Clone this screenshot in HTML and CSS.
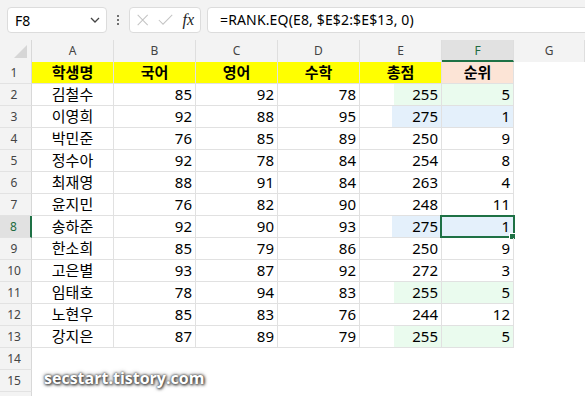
FILE: index.html
```html
<!DOCTYPE html>
<html lang="ko">
<head>
  <meta charset="UTF-8">
  <title>RANK.EQ</title>
  <link rel="stylesheet" href="styles.css">
</head>
<body>
<div class="app">
  <div class="formula-bar">
    <div class="name-box">
      <span>F8</span>
      <svg class="chevron" width="10" height="6" viewBox="0 0 10 6"><path d="M1 1 L5 5 L9 1" fill="none" stroke="#444" stroke-width="1.3"/></svg>
    </div>
    <div class="dots"><i></i><i></i><i></i></div>
    <div class="fx-box">
      <svg width="16" height="16" viewBox="0 0 16 16"><path d="M2 2 L14 14 M14 2 L2 14" stroke="#c4c4c4" stroke-width="1.2"/></svg>
      <svg width="18" height="16" viewBox="0 0 18 16"><path d="M1 8 L6 13 L17 2" fill="none" stroke="#c4c4c4" stroke-width="1.2"/></svg>
      <span class="fx">fx</span>
    </div>
    <div class="formula">=RANK.EQ(E8, $E$2:$E$13, 0)</div>
  </div>

  <div class="sheet">
    <div class="row head">
      <div class="corner"><svg width="13" height="13" viewBox="0 0 13 13"><path d="M13 0 L13 13 L0 13 Z" fill="#d6d6d6"/></svg></div>
      <div class="ch">A</div><div class="ch">B</div><div class="ch">C</div><div class="ch">D</div><div class="ch">E</div><div class="ch active">F</div><div class="ch">G</div>
    </div>
    <div class="row">
      <div class="rh">1</div>
      <div class="c title yellow">학생명</div><div class="c title yellow">국어</div><div class="c title yellow">영어</div><div class="c title yellow">수학</div><div class="c title yellow">총점</div><div class="c title peach">순위</div><div class="e"></div>
    </div>
    <div class="row">
      <div class="rh">2</div>
      <div class="c name">김철수</div><div class="c">85</div><div class="c">92</div><div class="c">78</div><div class="c part-green">255</div><div class="c green">5</div><div class="e"></div>
    </div>
    <div class="row">
      <div class="rh">3</div>
      <div class="c name">이영희</div><div class="c">92</div><div class="c">88</div><div class="c">95</div><div class="c part-blue">275</div><div class="c blue">1</div><div class="e"></div>
    </div>
    <div class="row">
      <div class="rh">4</div>
      <div class="c name">박민준</div><div class="c">76</div><div class="c">85</div><div class="c">89</div><div class="c">250</div><div class="c">9</div><div class="e"></div>
    </div>
    <div class="row">
      <div class="rh">5</div>
      <div class="c name">정수아</div><div class="c">92</div><div class="c">78</div><div class="c">84</div><div class="c">254</div><div class="c">8</div><div class="e"></div>
    </div>
    <div class="row">
      <div class="rh">6</div>
      <div class="c name">최재영</div><div class="c">88</div><div class="c">91</div><div class="c">84</div><div class="c">263</div><div class="c">4</div><div class="e"></div>
    </div>
    <div class="row">
      <div class="rh">7</div>
      <div class="c name">윤지민</div><div class="c">76</div><div class="c">82</div><div class="c">90</div><div class="c">248</div><div class="c">11</div><div class="e"></div>
    </div>
    <div class="row">
      <div class="rh active">8</div>
      <div class="c name">송하준</div><div class="c">92</div><div class="c">90</div><div class="c">93</div><div class="c part-blue">275</div><div class="c blue selected">1<span class="handle"></span></div><div class="e"></div>
    </div>
    <div class="row">
      <div class="rh">9</div>
      <div class="c name">한소희</div><div class="c">85</div><div class="c">79</div><div class="c">86</div><div class="c">250</div><div class="c">9</div><div class="e"></div>
    </div>
    <div class="row">
      <div class="rh">10</div>
      <div class="c name">고은별</div><div class="c">93</div><div class="c">87</div><div class="c">92</div><div class="c">272</div><div class="c">3</div><div class="e"></div>
    </div>
    <div class="row">
      <div class="rh">11</div>
      <div class="c name">임태호</div><div class="c">78</div><div class="c">94</div><div class="c">83</div><div class="c part-green">255</div><div class="c green">5</div><div class="e"></div>
    </div>
    <div class="row">
      <div class="rh">12</div>
      <div class="c name">노현우</div><div class="c">85</div><div class="c">83</div><div class="c">76</div><div class="c">244</div><div class="c">12</div><div class="e"></div>
    </div>
    <div class="row">
      <div class="rh">13</div>
      <div class="c name">강지은</div><div class="c">87</div><div class="c">89</div><div class="c">79</div><div class="c part-green">255</div><div class="c green">5</div><div class="e"></div>
    </div>
    <div class="row">
      <div class="rh">14</div>
      <div class="e"></div><div class="e"></div><div class="e"></div><div class="e"></div><div class="e"></div><div class="e"></div><div class="e"></div>
    </div>
    <div class="row">
      <div class="rh">15</div>
      <div class="e"></div><div class="e"></div><div class="e"></div><div class="e"></div><div class="e"></div><div class="e"></div><div class="e"></div>
    </div>
    <div class="row">
      <div class="rh"></div>
      <div class="e"></div><div class="e"></div><div class="e"></div><div class="e"></div><div class="e"></div><div class="e"></div><div class="e"></div>
    </div>
  </div>

  <div class="watermark">secstart.tistory.com</div>
</div>
</body>
</html>
```

FILE: styles.css
```css
body {
  margin: 0;
  background: #ffffff;
  font-family: "Noto Sans", "Noto Sans CJK KR", sans-serif;
  color: #000;
}

.app {
  position: relative;
  width: 585px;
  height: 396px;
  overflow: hidden;
}

/* formula bar */
.formula-bar {
  display: flex;
  align-items: center;
  height: 40px;
  padding-left: 7px;
  background: #f3f3f3;
  box-sizing: border-box;
}

.name-box {
  display: flex;
  align-items: center;
  justify-content: space-between;
  width: 100px;
  height: 26px;
  box-sizing: border-box;
  padding: 0 6px 0 7px;
  background: #fff;
  border: 1px solid #dcdcdc;
  border-radius: 4px;
  font-size: 14px;
}

.dots {
  display: flex;
  flex-direction: column;
  gap: 2px;
  width: 22px;
  align-items: center;
}

.dots i {
  width: 2px;
  height: 2px;
  background: #444;
  border-radius: 1px;
}

.fx-box {
  display: flex;
  align-items: center;
  gap: 9px;
  width: 72px;
  height: 26px;
  box-sizing: border-box;
  padding: 0 6px 0 6px;
  background: #fff;
  border: 1px solid #dcdcdc;
  border-radius: 4px;
}

.fx {
  font-family: "Liberation Serif", serif;
  font-style: italic;
  font-size: 16px;
  color: #222;
}

.formula {
  flex: 1;
  height: 26px;
  margin-left: 6px;
  margin-right: -6px;
  box-sizing: border-box;
  padding-left: 12px;
  line-height: 24px;
  background: #fff;
  border: 1px solid #dcdcdc;
  border-radius: 4px;
  font-size: 14px;
  letter-spacing: 0.15px;
}

/* sheet grid */
.row {
  display: grid;
  grid-template-columns: 32px 82px 82px 82px 82px 82px 72px 1fr;
  height: 22px;
}

.row > div {
  box-sizing: border-box;
  height: 22px;
}

.corner {
  display: flex;
  align-items: flex-end;
  justify-content: flex-end;
  padding: 0 4px 4px 0;
  background: #f3f3f3;
  border-right: 1px solid #d8d8d8;
}

.ch {
  background: #f3f3f3;
  border-right: 1px solid #dedede;
  text-align: center;
  font-size: 12px;
  line-height: 22px;
  color: #444;
}

.ch.active {
  background: #e1e1e1;
  color: #1e6b40;
  border-bottom: 2px solid #1e7145;
  line-height: 21px;
}

.rh {
  background: #f3f3f3;
  border-right: 1px solid #d8d8d8;
  border-bottom: 1px solid #e2e2e2;
  text-align: center;
  font-size: 12px;
  line-height: 22px;
  color: #444;
  padding-right: 3px;
}

.rh.active {
  background: #e1e1e1;
  color: #1e6b40;
  border-right: 2px solid #1e7145;
}

.c {
  position: relative;
  border-right: 1px solid #e1e1e1;
  border-bottom: 1px solid #e1e1e1;
  padding: 0 3px;
  text-align: right;
  font-size: 15px;
  line-height: 21px;
}

.c.name,
.c.title {
  text-align: center;
}

.c.title {
  font-weight: bold;
}

.yellow { background: #ffff00; }
.peach { background: #fce4d6; }
.green { background: #eafbee; }
.blue { background: #e4f0fb; }
.part-green { background: linear-gradient(to right, transparent 34px, #eafbee 34px); }
.part-blue { background: linear-gradient(to right, transparent 32px, #e4f0fb 32px); }

.selected::before {
  content: "";
  position: absolute;
  top: -1px;
  left: -2px;
  right: -2px;
  bottom: -1px;
  border: 2px solid #1e7145;
}

.handle {
  position: absolute;
  right: -3px;
  bottom: -3px;
  width: 5px;
  height: 5px;
  background: #1e7145;
  border: 1px solid #fff;
}

/* blog watermark */
.watermark {
  position: absolute;
  left: 44px;
  top: 367px;
  font-family: "Open Sans", sans-serif;
  font-weight: bold;
  font-size: 16px;
  color: #fff;
  text-shadow: 0 0 2px #444, 1px 1px 3px #333, 0 0 4px #555;
}
```
